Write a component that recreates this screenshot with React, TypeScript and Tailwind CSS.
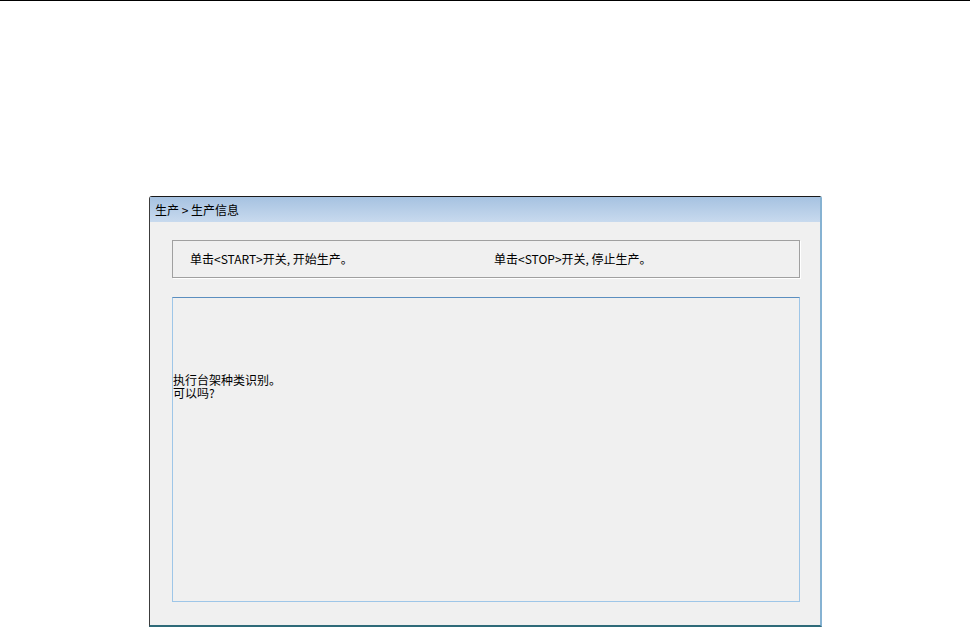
import React from "react";

const font = { fontFamily: '"Noto Sans CJK SC", "Liberation Sans", sans-serif' };

export default function App() {
  return (
    <div className="w-[970px] h-[627px] bg-white border-t border-black overflow-hidden" style={font}>
      <div className="ml-[149px] mt-[195px] w-[673px] h-[431px] flex flex-col bg-[#f0f0f0] border-l border-l-[#3c3c3c] border-t border-t-[#1a1a1a] border-r-2 border-r-[#86b2d2] border-b-2 border-b-[#2e6a78] rounded-tl-[3px] rounded-tr-[2px]">
        <div className="h-[25px] shrink-0 bg-gradient-to-b from-[#a6c2e1] to-[#c8daee] flex items-center pl-[5px] text-[12px] leading-none text-black">
          生产 &gt; 生产信息
        </div>
        <div className="flex-1 flex flex-col pl-[22px] pr-[20px] pt-[18px]">
          <div className="h-[38px] border border-[#a0a0a0] shadow-[1px_1px_0_#ffffff] flex items-center text-[12px] text-black">
            <div className="pl-[17px] w-[321px]">单击&lt;START&gt;开关, 开始生产。</div>
            <div>单击&lt;STOP&gt;开关, 停止生产。</div>
          </div>
          <div className="mt-[19px] h-[305px] border border-[#9ec6e8] border-t-[#5b8ebf] pt-[75px] text-[12px] leading-[13px] text-black">
            <div>执行台架种类识别。</div>
            <div>可以吗?</div>
          </div>
        </div>
      </div>
    </div>
  );
}
